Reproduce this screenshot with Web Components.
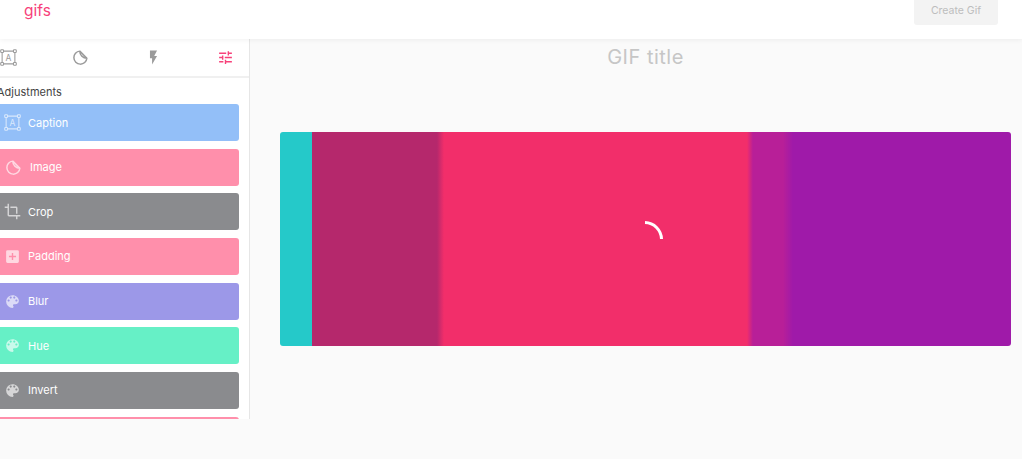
<!DOCTYPE html>
<html>
<head>
<meta charset="utf-8">
<title>gifs</title>
<style>
    html, body { margin: 0; height: 100%; overflow: hidden; background: #fafafa; }
    body { font-family: Inter, "Open Sans", sans-serif; }
</style>
</head>
<body>
<gif-app></gif-app>

<script>
const ICONS = {
    caption: `<path d="M3 3h18v18H3z" fill="none" stroke="currentColor" stroke-width="1.5"/>
        <g fill="var(--handle, #fff)" stroke="currentColor" stroke-width="1.5"><rect x="1" y="1" width="4" height="4" rx="1"/><rect x="19" y="1" width="4" height="4" rx="1"/><rect x="1" y="19" width="4" height="4" rx="1"/><rect x="19" y="19" width="4" height="4" rx="1"/></g>
        <text x="12" y="17" font-size="12" text-anchor="middle" fill="currentColor" font-family="Inter, sans-serif">A</text>`,
    image: `<path d="M11 3a9.2 9.2 0 1 0 10 10L11 3zM11 3c0 5.5 4.5 10 10 10" fill="none" stroke="currentColor" stroke-width="2.1" stroke-linejoin="round"/>`,
    flash: `<path d="M7 2v11h3v9l7-12h-4l4-8z" fill="currentColor"/>`,
    tune: `<path fill="currentColor" d="M3 17v2h6v-2H3zM3 5v2h10V5H3zm10 16v-2h8v-2h-8v-2h-2v6h2zM7 9v2H3v2h4v2h2V9H7zm14 4v-2H11v2h10zm-6-4h2V7h4V5h-4V3h-2v6z"/>`,
    crop: `<path fill="currentColor" d="M17 15h2V7c0-1.1-.9-2-2-2H9v2h8v8zM7 17V1H5v4H1v2h4v10c0 1.1.9 2 2 2h10v4h2v-4h4v-2H7z"/>`,
    padding: `<path fill="currentColor" fill-rule="evenodd" d="M5 3h14a2 2 0 0 1 2 2v14a2 2 0 0 1-2 2H5a2 2 0 0 1-2-2V5a2 2 0 0 1 2-2zm6 4v4H7v2h4v4h2v-4h4v-2h-4V7z"/>`,
    palette: `<path fill="currentColor" d="M12 3a9 9 0 0 0 0 18c.83 0 1.5-.67 1.5-1.5 0-.39-.15-.74-.39-1.01-.23-.26-.38-.61-.38-.99 0-.83.67-1.5 1.5-1.5H16c2.76 0 5-2.24 5-5 0-4.42-4.03-8-9-8zm-5.5 9c-.83 0-1.5-.67-1.5-1.5S5.67 9 6.5 9 8 9.67 8 10.5 7.33 12 6.5 12zm3-4C8.67 8 8 7.33 8 6.5S8.67 5 9.5 5s1.5.67 1.5 1.5S10.33 8 9.5 8zm5 0c-.83 0-1.5-.67-1.5-1.5S13.67 5 14.5 5s1.5.67 1.5 1.5S15.33 8 14.5 8zm3 4c-.83 0-1.5-.67-1.5-1.5S16.67 9 17.5 9s1.5.67 1.5 1.5-.67 1.5-1.5 1.5z"/>`
};

function iconSvg(name, size) {
    return `<svg viewBox="0 0 24 24" width="${size}" height="${size}" aria-hidden="true">${ICONS[name]}</svg>`;
}

class AppHeader extends HTMLElement {
    constructor() {
        super();
        this.attachShadow({ mode: "open" });
        this.shadowRoot.innerHTML = `
            <style>
                :host {
                    display: flex;
                    justify-content: space-between;
                    align-items: flex-start;
                    height: 39px;
                    padding: 0 24px;
                    background: #fff;
                    box-shadow: 0 1px 5px rgba(0, 0, 0, 0.06);
                    position: relative;
                    z-index: 1;
                }
                .logo { color: #f7417a; font-size: 15.5px; line-height: 21px; }
                .create {
                    width: 84px;
                    height: 25px;
                    line-height: 21px;
                    text-align: center;
                    font-size: 10.5px;
                    color: #bdbdbd;
                    background: #f3f3f3;
                    border-radius: 0 0 3px 3px;
                }
            </style>
            <span class="logo">gifs</span>
            <span class="create">Create Gif</span>
        `;
    }
}

class TabBar extends HTMLElement {
    constructor() {
        super();
        this.attachShadow({ mode: "open" });
        var tabs = [["caption", "#9b9b9b"], ["image", "#9b9b9b"], ["flash", "#9b9b9b"], ["tune", "#f7417a"]];
        var cells = tabs.map(function (tab) {
            return `<span class="tab" style="color:${tab[1]}">${iconSvg(tab[0], 17)}</span>`;
        }).join("");
        this.shadowRoot.innerHTML = `
            <style>
                :host {
                    display: grid;
                    grid-template-columns: repeat(4, 72.5px);
                    height: 37px;
                    margin-left: -28px;
                    width: 290px;
                    --handle: #fff;
                }
                .tab { display: flex; align-items: center; justify-content: center; }
            </style>
            ${cells}
        `;
    }
}

class AdjustButton extends HTMLElement {
    constructor() {
        super();
        this.attachShadow({ mode: "open" });
        var color = this.getAttribute("color");
        var icon = this.getAttribute("icon");
        this.shadowRoot.innerHTML = `
            <style>
                :host {
                    display: flex;
                    align-items: center;
                    flex: none;
                    height: 37px;
                    padding-left: 11px;
                    border-radius: 3px;
                    color: #fff;
                    font-size: 11px;
                    background: ${color};
                    --handle: ${color};
                }
                .icon { display: flex; width: 23px; margin-right: 4px; justify-content: center; opacity: 0.65; }
                :host([icon="image"]) .icon { margin: 0 5px 0 1px; }
            </style>
            <span class="icon">${iconSvg(icon, 17)}</span>
            <slot></slot>
        `;
    }
}

class SidePanel extends HTMLElement {
    constructor() {
        super();
        this.attachShadow({ mode: "open" });
        this.shadowRoot.innerHTML = `
            <style>
                :host {
                    display: block;
                    flex: none;
                    width: 249px;
                    height: 380px;
                    overflow: hidden;
                    background: #fff;
                    border-right: 1px solid #e6e6e6;
                }
                .title {
                    height: 26px;
                    margin-left: -3px;
                    padding-top: 1px;
                    box-sizing: border-box;
                    border-top: 2px solid #f0f0f0;
                    line-height: 26px;
                    font-size: 11px;
                    color: #444;
                }
                .list {
                    display: flex;
                    flex-direction: column;
                    gap: 7.67px;
                    margin: 2px 10px 0 -10px;
                }
            </style>
            <tab-bar></tab-bar>
            <div class="title">Adjustments</div>
            <div class="list"><slot></slot></div>
        `;
    }
}

class GifStage extends HTMLElement {
    constructor() {
        super();
        this.attachShadow({ mode: "open" });
        this.shadowRoot.innerHTML = `
            <style>
                :host {
                    display: block;
                    flex: 1;
                    padding: 0 11px 0 30px;
                }
                h1 {
                    margin: 0;
                    height: 93px;
                    padding-top: 5px;
                    box-sizing: border-box;
                    text-align: center;
                    font-size: 20px;
                    letter-spacing: 0.5px;
                    line-height: 26px;
                    font-weight: 400;
                    color: #c6c6c6;
                }
                .canvas {
                    display: grid;
                    place-items: center;
                    height: 214px;
                    border-radius: 3px;
                    background: linear-gradient(90deg,
                        #25c9c9 0, #25c9c9 32px,
                        #b5286c 32.5px, #b5286c 157px, #f22e6a 164px,
                        #f22e6a 467px, #b81f98 473px,
                        #b81f98 503px, #9f1aa9 513px, #9f1aa9 100%);
                }
                svg { display: block; }
            </style>
            <h1>GIF title</h1>
            <div class="canvas">
                <svg width="40" height="40" viewBox="0 0 40 40" aria-hidden="true">
                    <path d="M19 3.5A17 17 0 0 1 35.5 20" fill="none" stroke="#fff" stroke-width="3"/>
                </svg>
            </div>
        `;
    }
}

class GifApp extends HTMLElement {
    constructor() {
        super();
        this.attachShadow({ mode: "open" });
        var items = [
            ["Caption", "caption", "#93bff8"],
            ["Image", "image", "#ff8fab"],
            ["Crop", "crop", "#8a8b8e"],
            ["Padding", "padding", "#ff8fab"],
            ["Blur", "palette", "#9c98e8"],
            ["Hue", "palette", "#66f0c6"],
            ["Invert", "palette", "#8a8b8e"],
            ["", "palette", "#ff8fab"]
        ];
        var buttons = items.map(function (item) {
            return `<adjust-button icon="${item[1]}" color="${item[2]}">${item[0]}</adjust-button>`;
        }).join("");
        this.shadowRoot.innerHTML = `
            <style>
                :host { display: block; }
                .body { display: flex; align-items: flex-start; }
            </style>
            <app-header></app-header>
            <div class="body">
                <side-panel>${buttons}</side-panel>
                <gif-stage></gif-stage>
            </div>
        `;
    }
}

customElements.define("app-header", AppHeader);
customElements.define("tab-bar", TabBar);
customElements.define("adjust-button", AdjustButton);
customElements.define("side-panel", SidePanel);
customElements.define("gif-stage", GifStage);
customElements.define("gif-app", GifApp);
</script>
</body>
</html>
